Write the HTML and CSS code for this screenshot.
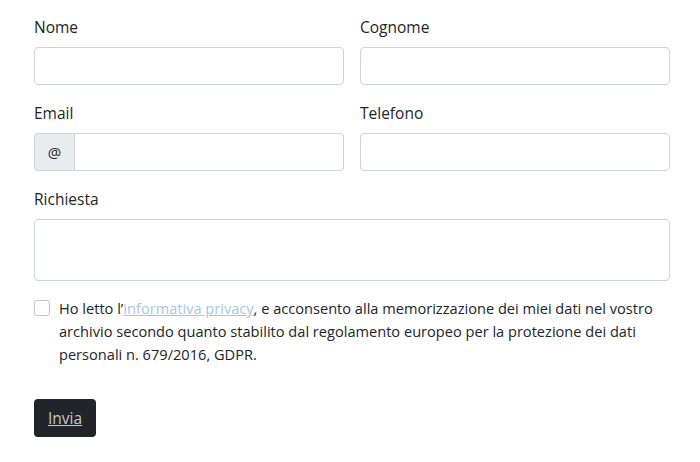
FILE: index.html
```html
<!DOCTYPE html>
<html lang="it">
<head>
<meta charset="utf-8">
<link rel="stylesheet" href="styles.css">
</head>
<body>
<form class="form">
  <div class="row">
    <div class="field">
      <label class="label">Nome</label>
      <input class="input" type="text">
    </div>
    <div class="field">
      <label class="label">Cognome</label>
      <input class="input" type="text">
    </div>
  </div>
  <div class="row">
    <div class="field">
      <label class="label">Email</label>
      <div class="group">
        <span class="addon">@</span>
        <input class="input input-grouped" type="text">
      </div>
    </div>
    <div class="field">
      <label class="label">Telefono</label>
      <input class="input" type="text">
    </div>
  </div>
  <div class="field">
    <label class="label">Richiesta</label>
    <textarea class="input textarea"></textarea>
  </div>
  <div class="check">
    <span class="box"></span>
    <p class="check-text">Ho letto l’<a class="link" href="#">informativa privacy</a>, e acconsento alla memorizzazione dei miei dati nel vostro archivio secondo quanto stabilito dal regolamento europeo per la protezione dei dati personali n. 679/2016, GDPR.</p>
  </div>
  <button class="btn" type="button">Invia</button>
</form>
</body>
</html>
```
FILE: styles.css
```css
* { box-sizing: border-box; }
html, body { margin: 0; background: #fff; }
body {
  font-family: "Open Sans", "Noto Sans", sans-serif;
  color: #212529;
}
.form {
  width: 636px;
  margin: 15px 0 0 34px;
}
.row {
  display: grid;
  grid-template-columns: 310px 310px;
  column-gap: 16px;
}
.field { margin-bottom: 16px; }
.label {
  display: block;
  font-size: 15.5px;
  line-height: 24px;
  margin-bottom: 8px;
}
.input {
  display: block;
  width: 100%;
  height: 38px;
  border: 1px solid #ced4da;
  border-radius: 4px;
  background: #fff;
  font: inherit;
}
.group { display: flex; }
.addon {
  width: 41px;
  height: 38px;
  display: flex;
  align-items: center;
  justify-content: center;
  background: #e9ecef;
  border: 1px solid #ced4da;
  border-radius: 4px 0 0 4px;
  font-size: 15px;
}
.input-grouped {
  flex: 1;
  border-left: 0;
  border-radius: 0 4px 4px 0;
}
.textarea {
  height: 62px;
  resize: none;
}
.check {
  display: flex;
  align-items: flex-start;
  gap: 9px;
  margin-top: 18px;
}
.box {
  flex: none;
  width: 16px;
  height: 16px;
  margin-top: 1px;
  border: 1px solid #bfc4c9;
  border-radius: 3px;
  background: #fff;
}
.check-text {
  margin: -2px 0 0;
  font-size: 14.6px;
  line-height: 23px;
}
.link { color: #a6c6e8; text-decoration: underline; }
.btn {
  display: block;
  margin-top: 33px;
  height: 38px;
  padding: 0 14px;
  border: 0;
  border-radius: 4px;
  background: #212529;
  color: #c8c8c8;
  font: inherit;
  font-size: 15.5px;
  text-decoration: underline;
}
```
